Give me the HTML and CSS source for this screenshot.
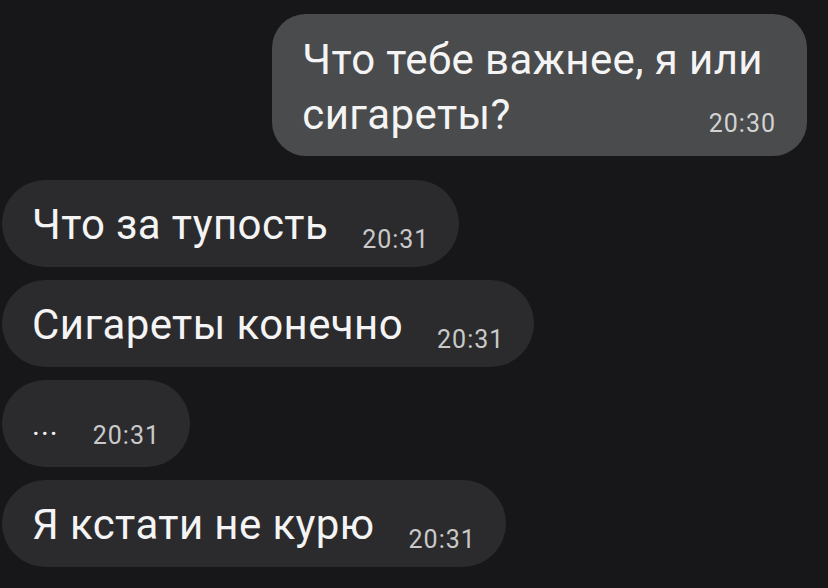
FILE: index.html
```html
<!DOCTYPE html>
<html lang="ru">
<head>
    <meta charset="UTF-8">
    <meta name="viewport" content="width=device-width, initial-scale=1.0">
    <title>Чат</title>
    <link rel="stylesheet" href="styles.css">
</head>
<body>
    <div class="chat">
        <!-- исходящее -->
        <div class="bubble out">
            <span class="text">Что тебе важнее, я или<br>сигареты?</span>
            <span class="time">20:30</span>
        </div>

        <!-- входящие -->
        <div class="bubble in">
            <span class="text">Что за тупость</span>
            <span class="time">20:31</span>
        </div>
        <div class="bubble in">
            <span class="text">Сигареты конечно</span>
            <span class="time">20:31</span>
        </div>
        <div class="bubble in">
            <span class="text dots">...</span>
            <span class="time">20:31</span>
        </div>
        <div class="bubble in">
            <span class="text">Я кстати не курю</span>
            <span class="time">20:31</span>
        </div>
    </div>
</body>
</html>
```

FILE: styles.css
```css
html, body {
    margin: 0;
    padding: 0;
    background-color: #171719;
}
body {
    font-family: Roboto, "Noto Sans", sans-serif;
    color: #f4f4f4;
    height: 588px;
    overflow: hidden;
}
.chat {
    display: flex;
    flex-direction: column;
    padding: 14px 21px 0 2px;
}
.bubble {
    display: flex;
    align-items: baseline;
    gap: 34px;
    padding: 17px 30px 15px 30px;
    border-radius: 44px;
    background-color: #2b2b2d;
    margin-bottom: 13px;
}
.bubble.in {
    align-self: flex-start;
}
.bubble.out {
    align-self: flex-end;
    display: grid;
    padding: 18px 44px 14px 30px;
    border-radius: 34px;
    background-color: #4a4b4d;
    margin-bottom: 24px;
}
.text {
    font-size: 42px;
    line-height: 55px;
    letter-spacing: 0.4px;
    white-space: nowrap;
}
.time {
    font-size: 25px;
    letter-spacing: 1px;
    color: #c9c9c9;
    position: relative;
    top: 9px;
}
.out .text,
.out .time {
    grid-area: 1 / 1;
}
.out .time {
    justify-self: end;
    align-self: end;
    margin-right: -13px;
    line-height: 55px;
    color: #d2d2d2;
}
.dots {
    font-size: 30px;
    letter-spacing: 1px;
}
```
